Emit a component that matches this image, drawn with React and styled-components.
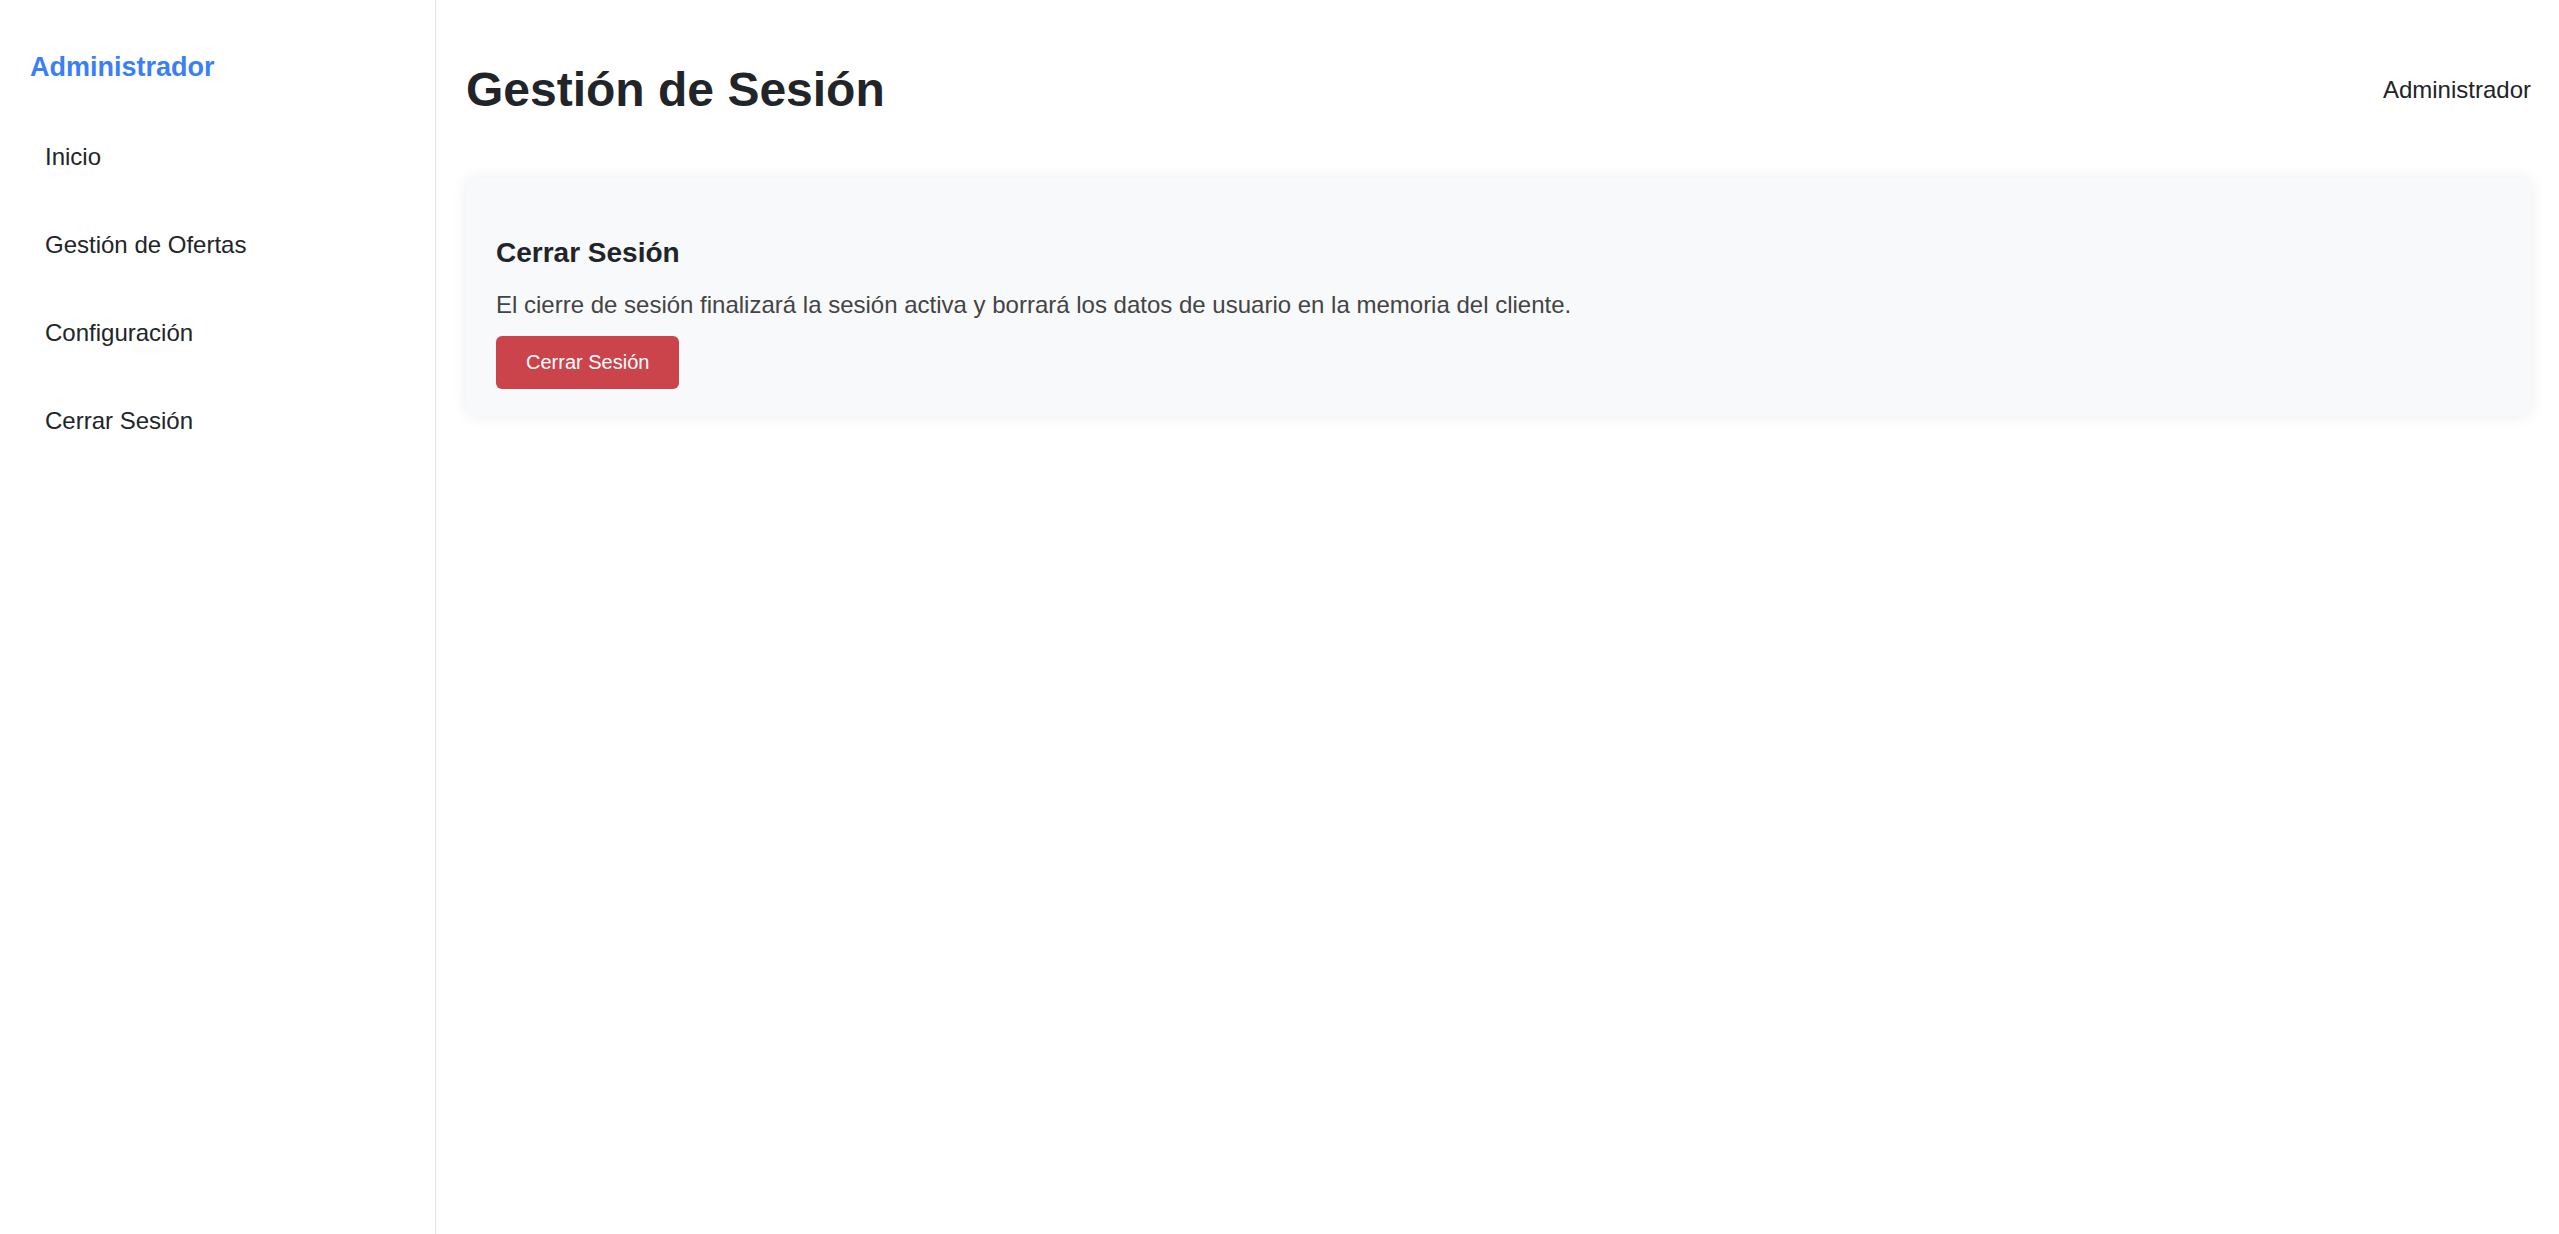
import React from 'react';
import styled, { createGlobalStyle } from 'styled-components';

const GlobalStyle = createGlobalStyle`
  * { box-sizing: border-box; }
  body {
    margin: 0;
    font-family: "Liberation Sans", Arial, sans-serif;
    color: #212529;
    background: #fff;
  }
`;

const Layout = styled.div`
  display: flex;
  min-height: 100vh;
`;

const Sidebar = styled.aside`
  width: 436px;
  flex-shrink: 0;
  padding: 20px;
  border-right: 1px solid #e3e3e3;
  background: #fff;
`;

const Brand = styled.h2`
  margin: 31px 0 30px 10px;
  font-size: 27px;
  line-height: 32px;
  font-weight: 700;
  color: #3a7ff6;
`;

const Nav = styled.nav`
  display: flex;
  flex-direction: column;
`;

const NavLink = styled.a`
  display: block;
  padding: 30px 25px;
  font-size: 24px;
  line-height: 28px;
  color: #212529;
  text-decoration: none;
  cursor: pointer;
`;

const Main = styled.main`
  flex: 1;
  padding: 30px 28px 30px 30px;
`;

const Header = styled.header`
  display: flex;
  justify-content: space-between;
  align-items: center;
  padding: 31px 0 30px;
  margin-bottom: 29px;
`;

const Title = styled.h1`
  margin: 0;
  font-size: 48px;
  line-height: 58px;
  font-weight: 700;
  color: #212529;
`;

const UserName = styled.span`
  font-size: 24px;
  line-height: 28px;
  color: #212529;
`;

const Card = styled.section`
  background: #f8f9fa;
  border-radius: 10px;
  box-shadow: 0 0 15px rgba(0, 0, 0, 0.08);
  padding: 30px 30px 27px;
`;

const CardTitle = styled.h3`
  margin: 29px 0 22px;
  font-size: 28px;
  line-height: 32px;
  font-weight: 700;
  color: #212529;
`;

const CardText = styled.p`
  margin: 0 0 17px;
  font-size: 24px;
  line-height: 28px;
  color: #444;
`;

const DangerButton = styled.button`
  border: none;
  border-radius: 6px;
  padding: 15px 30px;
  font-family: inherit;
  font-size: 20px;
  line-height: 23px;
  color: #fff;
  background: #cb444b;
  cursor: pointer;
`;

const links = ['Inicio', 'Gestión de Ofertas', 'Configuración', 'Cerrar Sesión'];

export default function App() {
  return (
    <>
      <GlobalStyle />
      <Layout>
        <Sidebar>
          <Brand>Administrador</Brand>
          <Nav>
            {links.map((l) => (
              <NavLink key={l}>{l}</NavLink>
            ))}
          </Nav>
        </Sidebar>
        <Main>
          <Header>
            <Title>Gestión de Sesión</Title>
            <UserName>Administrador</UserName>
          </Header>
          <Card>
            <CardTitle>Cerrar Sesión</CardTitle>
            <CardText>
              El cierre de sesión finalizará la sesión activa y borrará los datos de usuario en la memoria del cliente.
            </CardText>
            <DangerButton>Cerrar Sesión</DangerButton>
          </Card>
        </Main>
      </Layout>
    </>
  );
}
